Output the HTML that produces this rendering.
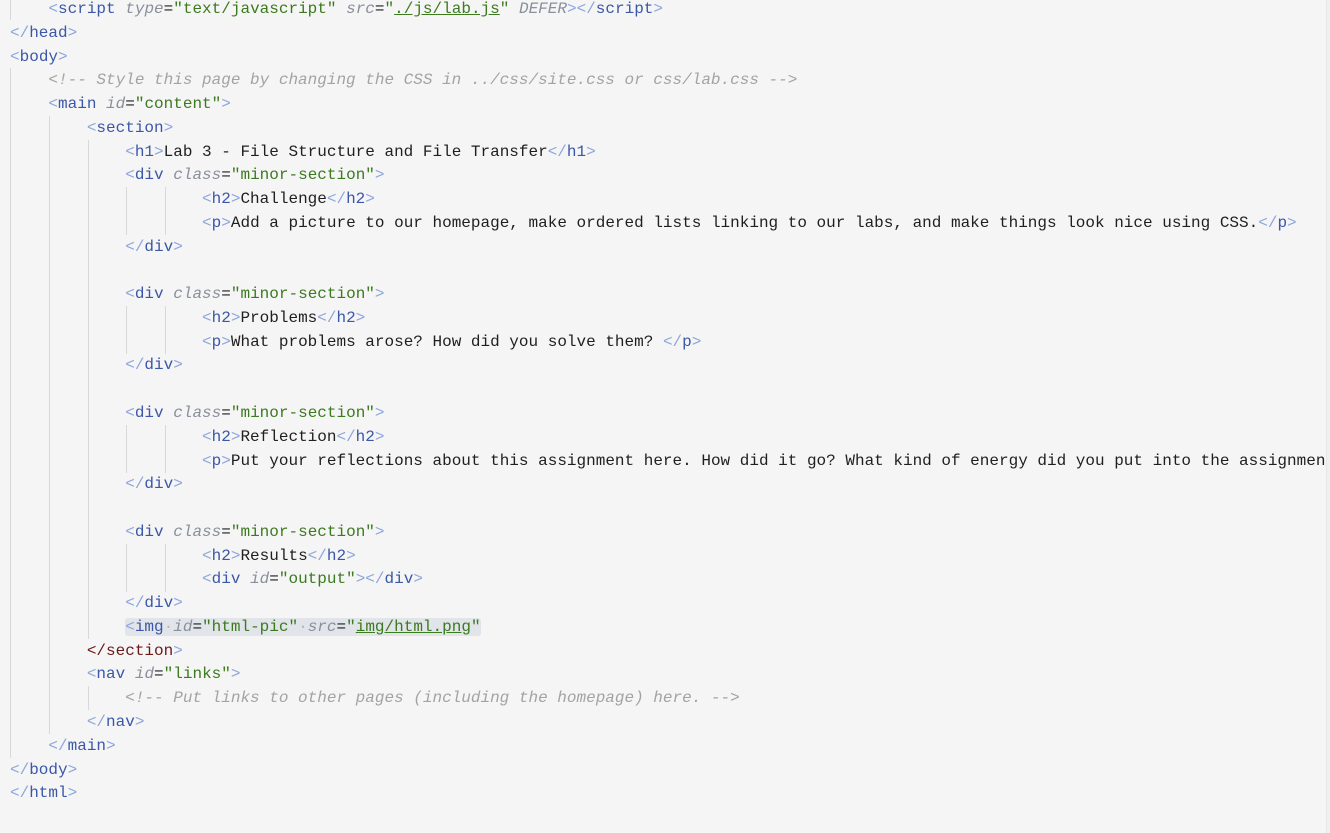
<!DOCTYPE html>
<html><head><meta charset="utf-8"><style>
html,body{margin:0;padding:0;background:#f5f5f5;width:1330px;height:833px;overflow:hidden}
#ed{position:absolute;left:10px;top:-2px;width:1317px;overflow:hidden}
pre{margin:0;font-family:"Liberation Mono",monospace;font-size:16px;line-height:23.76px;color:#1f1f1f;white-space:pre}
.b{color:#8da6dc}.t{color:#3b57a8}.a{color:#8a8f9c;font-style:italic}.s{color:#3c7a1f}.c{color:#a3a3a3;font-style:italic}
.u{text-decoration:underline;text-decoration-color:#3c7a1f}.r{color:#6b1a1a}.d{color:#b8b8b8}
.g{position:absolute;width:1px;background:#d8d8d8}
.hl{background:#e1e4e9;border-radius:3px}
#rb{position:absolute;left:1326px;top:0;width:4px;height:833px;background:#f0f0f0;border-left:1px solid #e6e6e6}
</style></head><body>
<div class="g" style="left:10px;top:0;height:20px"></div>
<div class="g" style="left:10px;top:68px;height:690px"></div>
<div class="g" style="left:49px;top:116px;height:618px"></div>
<div class="g" style="left:88px;top:140px;height:499px"></div>
<div class="g" style="left:88px;top:686px;height:24px"></div>
<div class="g" style="left:126px;top:187px;height:48px"></div><div class="g" style="left:165px;top:187px;height:48px"></div>
<div class="g" style="left:126px;top:306px;height:48px"></div><div class="g" style="left:165px;top:306px;height:48px"></div>
<div class="g" style="left:126px;top:425px;height:48px"></div><div class="g" style="left:165px;top:425px;height:48px"></div>
<div class="g" style="left:126px;top:544px;height:48px"></div><div class="g" style="left:165px;top:544px;height:48px"></div>
<div id="ed"><pre>    <span class="b">&lt;</span><span class="t">script</span> <span class="a">type</span>=<span class="s">"text/javascript"</span> <span class="a">src</span>=<span class="s">"<span class="u">./js/lab.js</span>"</span> <span class="a">DEFER</span><span class="b">&gt;&lt;/</span><span class="t">script</span><span class="b">&gt;</span>
<span class="b">&lt;/</span><span class="t">head</span><span class="b">&gt;</span>
<span class="b">&lt;</span><span class="t">body</span><span class="b">&gt;</span>
    <span class="c">&lt;!-- Style this page by changing the CSS in ../css/site.css or css/lab.css --&gt;</span>
    <span class="b">&lt;</span><span class="t">main</span> <span class="a">id</span>=<span class="s">"content"</span><span class="b">&gt;</span>
        <span class="b">&lt;</span><span class="t">section</span><span class="b">&gt;</span>
            <span class="b">&lt;</span><span class="t">h1</span><span class="b">&gt;</span>Lab 3 - File Structure and File Transfer<span class="b">&lt;/</span><span class="t">h1</span><span class="b">&gt;</span>
            <span class="b">&lt;</span><span class="t">div</span> <span class="a">class</span>=<span class="s">"minor-section"</span><span class="b">&gt;</span>
                    <span class="b">&lt;</span><span class="t">h2</span><span class="b">&gt;</span>Challenge<span class="b">&lt;/</span><span class="t">h2</span><span class="b">&gt;</span>
                    <span class="b">&lt;</span><span class="t">p</span><span class="b">&gt;</span>Add a picture to our homepage, make ordered lists linking to our labs, and make things look nice using CSS.<span class="b">&lt;/</span><span class="t">p</span><span class="b">&gt;</span>
            <span class="b">&lt;/</span><span class="t">div</span><span class="b">&gt;</span>

            <span class="b">&lt;</span><span class="t">div</span> <span class="a">class</span>=<span class="s">"minor-section"</span><span class="b">&gt;</span>
                    <span class="b">&lt;</span><span class="t">h2</span><span class="b">&gt;</span>Problems<span class="b">&lt;/</span><span class="t">h2</span><span class="b">&gt;</span>
                    <span class="b">&lt;</span><span class="t">p</span><span class="b">&gt;</span>What problems arose? How did you solve them? <span class="b">&lt;/</span><span class="t">p</span><span class="b">&gt;</span>
            <span class="b">&lt;/</span><span class="t">div</span><span class="b">&gt;</span>

            <span class="b">&lt;</span><span class="t">div</span> <span class="a">class</span>=<span class="s">"minor-section"</span><span class="b">&gt;</span>
                    <span class="b">&lt;</span><span class="t">h2</span><span class="b">&gt;</span>Reflection<span class="b">&lt;/</span><span class="t">h2</span><span class="b">&gt;</span>
                    <span class="b">&lt;</span><span class="t">p</span><span class="b">&gt;</span>Put your reflections about this assignment here. How did it go? What kind of energy did you put into the assignment?<span class="b">&lt;/</span><span class="t">p</span><span class="b">&gt;</span>
            <span class="b">&lt;/</span><span class="t">div</span><span class="b">&gt;</span>

            <span class="b">&lt;</span><span class="t">div</span> <span class="a">class</span>=<span class="s">"minor-section"</span><span class="b">&gt;</span>
                    <span class="b">&lt;</span><span class="t">h2</span><span class="b">&gt;</span>Results<span class="b">&lt;/</span><span class="t">h2</span><span class="b">&gt;</span>
                    <span class="b">&lt;</span><span class="t">div</span> <span class="a">id</span>=<span class="s">"output"</span><span class="b">&gt;&lt;/</span><span class="t">div</span><span class="b">&gt;</span>
            <span class="b">&lt;/</span><span class="t">div</span><span class="b">&gt;</span>
            <span class="hl"><span class="b">&lt;</span><span class="t">img</span><span class="d">·</span><span class="a">id</span>=<span class="s">"html-pic"</span><span class="d">·</span><span class="a">src</span>=<span class="s">"<span class="u">img/html.png</span>"</span></span>
        <span class="r">&lt;/section</span><span class="b">&gt;</span>
        <span class="b">&lt;</span><span class="t">nav</span> <span class="a">id</span>=<span class="s">"links"</span><span class="b">&gt;</span>
            <span class="c">&lt;!-- Put links to other pages (including the homepage) here. --&gt;</span>
        <span class="b">&lt;/</span><span class="t">nav</span><span class="b">&gt;</span>
    <span class="b">&lt;/</span><span class="t">main</span><span class="b">&gt;</span>
<span class="b">&lt;/</span><span class="t">body</span><span class="b">&gt;</span>
<span class="b">&lt;/</span><span class="t">html</span><span class="b">&gt;</span></pre></div>
<div id="rb"></div>
</body></html>
